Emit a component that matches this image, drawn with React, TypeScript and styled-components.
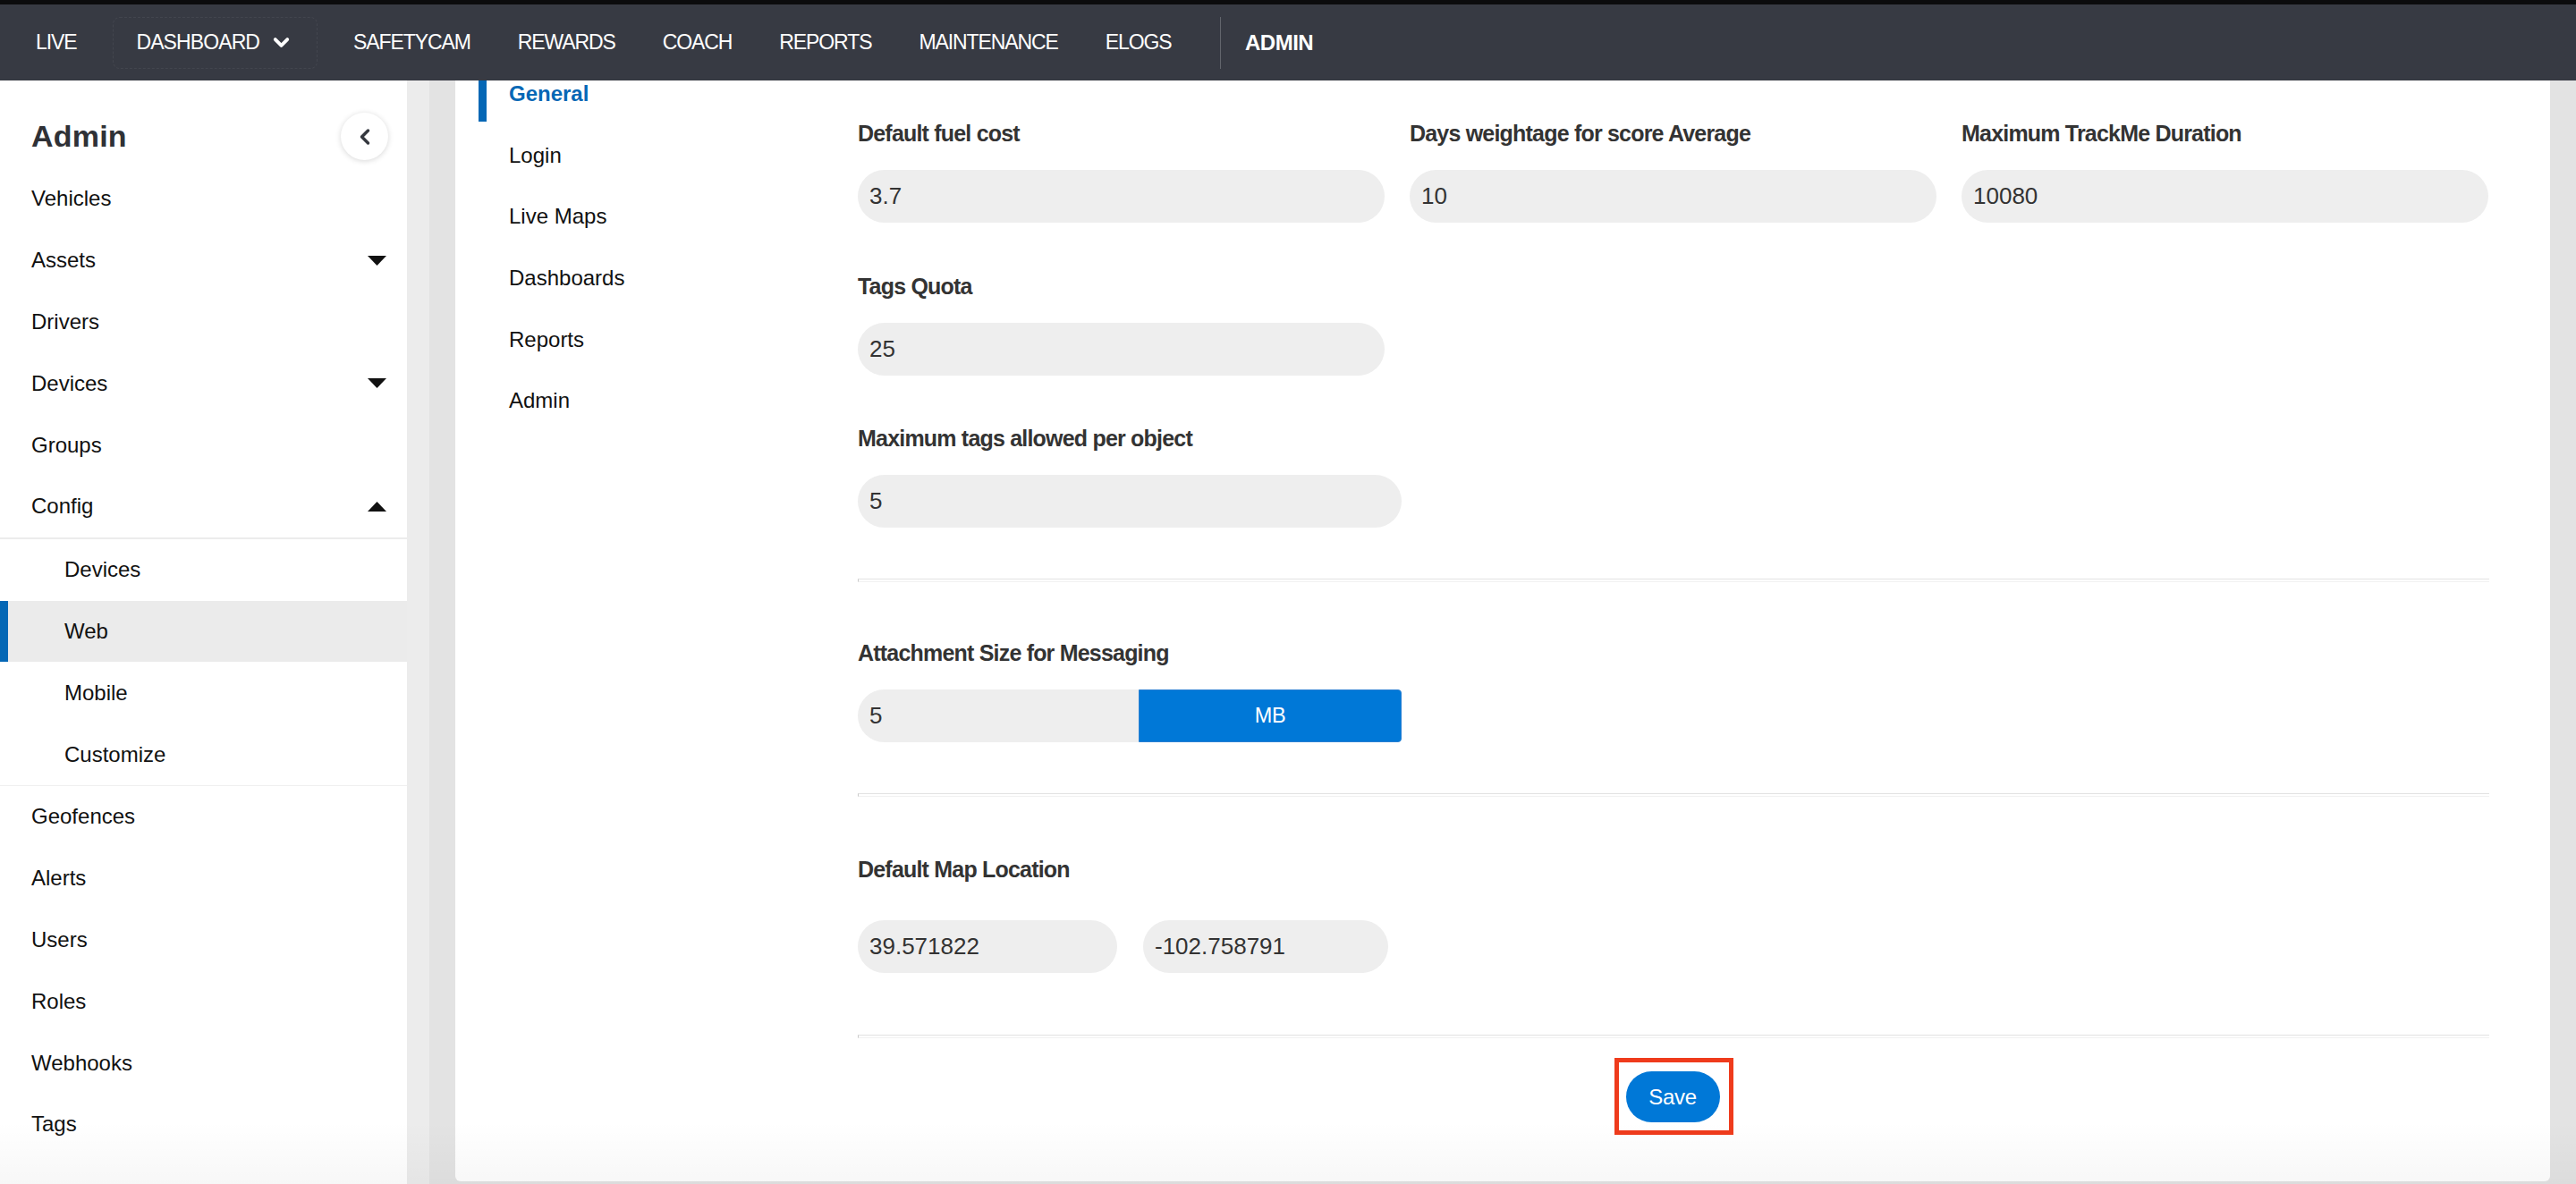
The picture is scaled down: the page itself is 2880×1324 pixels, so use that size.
import React from "react";
import styled, { createGlobalStyle } from "styled-components";
import { ChevronDown, ChevronLeft } from "lucide-react";

const SANS = `"Liberation Sans", Arial, sans-serif`;
const BLUE_DARK = "#0567b5";
const BLUE = "#0078d7";

const Global = createGlobalStyle`
  html, body { margin: 0; padding: 0; height: 1324px; overflow: hidden; background: #e3e3e3; }
  * { box-sizing: border-box; }
  body { font-family: ${SANS}; }
`;

const Page = styled.div`
  display: flex;
  flex-direction: column;
  height: 1324px;
`;

const TopBar = styled.nav`
  height: 90px;
  flex: none;
  background: #373a43;
  border-top: 5px solid #0b0b0d;
  display: flex;
  align-items: center;
  padding-left: 13.5px;
`;

const NavItem = styled.a<{ $bold?: boolean }>`
  font-family: ${SANS};
  font-size: ${(p) => (p.$bold ? 24 : 23)}px;
  letter-spacing: ${(p) => (p.$bold ? -0.5 : -1.1)}px;
  color: #fff;
  font-weight: ${(p) => (p.$bold ? 700 : 400)};
  padding: 0 26.5px;
  white-space: nowrap;
  text-decoration: none;
`;

const NavDrop = styled.a`
  display: flex;
  align-items: center;
  gap: 11px;
  height: 58px;
  margin: 0 14px;
  padding: 0 25.5px;
  border: 1px dashed rgba(255, 255, 255, 0.06);
  border-radius: 8px;
  font-family: ${SANS};
  font-size: 23px;
  letter-spacing: -0.9px;
  color: #fff;
  white-space: nowrap;
`;

const NavSep = styled.span`
  width: 1px;
  height: 58px;
  margin-left: 28.5px;
  background: rgba(255, 255, 255, 0.22);
`;

const Body = styled.div`
  flex: 1;
  display: flex;
  min-height: 0;
  position: relative;
  &::after {
    content: "";
    position: absolute;
    left: 0;
    right: 0;
    bottom: 0;
    height: 70px;
    pointer-events: none;
    background: linear-gradient(rgba(0, 0, 0, 0), rgba(0, 0, 0, 0.03));
  }
`;

const Sidebar = styled.aside`
  width: 480px;
  flex: none;
  background: #fff;
  border-right: 25px solid #ececec;
  display: flex;
  flex-direction: column;
  overflow: hidden;
`;

const SideHeader = styled.div`
  display: flex;
  align-items: center;
  justify-content: space-between;
  padding: 36px 21px 9px 35px;
`;

const SideTitle = styled.h1`
  margin: 0;
  font-family: ${SANS};
  font-weight: 900;
  font-size: 34px;
  color: #2f3136;
  letter-spacing: 0.2px;
`;

const CollapseBtn = styled.button`
  width: 53px;
  height: 53px;
  border-radius: 50%;
  border: none;
  background: #fff;
  box-shadow: 0 1px 6px rgba(0, 0, 0, 0.16);
  display: flex;
  align-items: center;
  justify-content: center;
  color: #35383f;
  padding: 0;
`;

const MenuItem = styled.div<{ $sub?: boolean; $active?: boolean }>`
  height: 68.8px;
  flex: none;
  display: flex;
  align-items: center;
  justify-content: space-between;
  padding: 0 23px 0 ${(p) => (p.$sub ? 72 : 35)}px;
  font-family: ${SANS};
  font-size: 24px;
  color: #111;
  background: ${(p) => (p.$active ? "#ebebeb" : "transparent")};
  box-shadow: ${(p) => (p.$active ? `inset 9px 0 0 ${BLUE_DARK}` : "none")};
`;

const MenuDivider = styled.div<{ $h: number; $c: string }>`
  height: ${(p) => p.$h}px;
  flex: none;
  background: ${(p) => p.$c};
`;

const Caret = ({ up }: { up?: boolean }) => (
  <svg width="21" height="11" viewBox="0 0 21 11">
    <polygon points={up ? "0,11 21,11 10.5,0" : "0,0 21,0 10.5,11"} fill="#111" />
  </svg>
);

const Main = styled.main`
  flex: 1;
  display: flex;
  padding: 0 29px 3px 29px;
  background: #e3e3e3;
  min-width: 0;
`;

const Panel = styled.section`
  flex: 1;
  display: flex;
  background: #fff;
  border-radius: 0 0 6px 6px;
  overflow: hidden;
  padding-left: 26px;
`;

const SubNav = styled.div`
  width: 424px;
  flex: none;
  margin-top: -22.6px;
  display: flex;
  flex-direction: column;
`;

const SubNavItem = styled.div<{ $active?: boolean }>`
  height: 68.6px;
  display: flex;
  align-items: center;
  border-left: 9px solid ${(p) => (p.$active ? BLUE_DARK : "transparent")};
  padding: 7px 0 0 25px;
  font-family: ${SANS};
  font-size: 24px;
  font-weight: ${(p) => (p.$active ? 700 : 400)};
  color: ${(p) => (p.$active ? BLUE_DARK : "#111")};
`;

const Form = styled.div`
  width: 1824px;
  flex: none;
  padding-top: 42px;
  display: flex;
  flex-direction: column;
`;

const Grid3 = styled.div`
  display: grid;
  grid-template-columns: repeat(3, 589px);
  column-gap: 28px;
`;

const Field = styled.div<{ $mt?: number; $w?: number }>`
  display: flex;
  flex-direction: column;
  margin-top: ${(p) => p.$mt ?? 0}px;
  width: ${(p) => (p.$w ? `${p.$w}px` : "auto")};
`;

const Label = styled.label<{ $gap?: number }>`
  font-family: ${SANS};
  font-weight: 700;
  font-size: 25px;
  letter-spacing: -0.8px;
  line-height: 34px;
  color: #333;
  margin-bottom: ${(p) => p.$gap ?? 24}px;
  white-space: nowrap;
`;

const TextInput = styled.input<{ $w?: number; $joined?: boolean }>`
  height: 59px;
  width: ${(p) => (p.$w ? `${p.$w}px` : "100%")};
  flex: none;
  border: none;
  outline: none;
  background: #eeeeee;
  border-radius: ${(p) => (p.$joined ? "30px 0 0 30px" : "30px")};
  padding: 0 13px;
  font-family: ${SANS};
  font-size: 26px;
  color: #333;
`;

const Group = styled.div`
  display: flex;
  width: 608px;
`;

const Addon = styled.button`
  flex: 1;
  height: 59px;
  border: 1px solid #2a80d2;
  border-radius: 0 4px 4px 0;
  background: ${BLUE};
  color: #fff;
  font-family: ${SANS};
  font-size: 23.5px;
  letter-spacing: -0.3px;
`;

const PairRow = styled.div`
  display: flex;
  gap: 29px;
`;

const Divider = styled.hr<{ $mt: number }>`
  margin: ${(p) => p.$mt}px 0 0;
  height: 4px;
  border: 0;
  border-top: 1px solid #e2e2e2;
  border-bottom: 1px solid #f1f1f1;
  border-left: 1px solid #c9c9c9;
`;

const SaveRow = styled.div`
  display: flex;
  justify-content: center;
  margin-top: 22px;
`;

const Highlight = styled.div`
  border: 5px solid #ef3b1c;
  padding: 10px 10px 9px 8px;
  display: flex;
`;

const SaveButton = styled.button`
  width: 105px;
  height: 57px;
  border: none;
  border-radius: 29px;
  background: ${BLUE};
  color: #fff;
  font-family: ${SANS};
  font-size: 24px;
  letter-spacing: -0.3px;
`;

const navItems = ["SAFETYCAM", "REWARDS", "COACH", "REPORTS", "MAINTENANCE", "ELOGS"];

type MenuEntry =
  | { kind: "item"; label: string; caret?: "up" | "down"; sub?: boolean; active?: boolean }
  | { kind: "divider"; h: number; c: string };

const menu: MenuEntry[] = [
  { kind: "item", label: "Vehicles" },
  { kind: "item", label: "Assets", caret: "down" },
  { kind: "item", label: "Drivers" },
  { kind: "item", label: "Devices", caret: "down" },
  { kind: "item", label: "Groups" },
  { kind: "item", label: "Config", caret: "up" },
  { kind: "divider", h: 2, c: "#ececec" },
  { kind: "item", label: "Devices", sub: true },
  { kind: "item", label: "Web", sub: true, active: true },
  { kind: "item", label: "Mobile", sub: true },
  { kind: "item", label: "Customize", sub: true },
  { kind: "divider", h: 1, c: "#efefef" },
  { kind: "item", label: "Geofences" },
  { kind: "item", label: "Alerts" },
  { kind: "item", label: "Users" },
  { kind: "item", label: "Roles" },
  { kind: "item", label: "Webhooks" },
  { kind: "item", label: "Tags" },
];

const subNav = ["General", "Login", "Live Maps", "Dashboards", "Reports", "Admin"];

export default function App() {
  return (
    <>
      <Global />
      <Page>
        <TopBar>
          <NavItem>LIVE</NavItem>
          <NavDrop>
            DASHBOARD
            <ChevronDown size={27} strokeWidth={3.4} />
          </NavDrop>
          {navItems.map((n) => (
            <NavItem key={n}>{n}</NavItem>
          ))}
          <NavSep />
          <NavItem $bold>ADMIN</NavItem>
        </TopBar>
        <Body>
          <Sidebar>
            <SideHeader>
              <SideTitle>Admin</SideTitle>
              <CollapseBtn aria-label="collapse">
                <ChevronLeft size={28} strokeWidth={3} />
              </CollapseBtn>
            </SideHeader>
            {menu.map((m, i) =>
              m.kind === "divider" ? (
                <MenuDivider key={i} $h={m.h} $c={m.c} />
              ) : (
                <MenuItem key={i} $sub={m.sub} $active={m.active}>
                  <span>{m.label}</span>
                  {m.caret && <Caret up={m.caret === "up"} />}
                </MenuItem>
              )
            )}
          </Sidebar>
          <Main>
            <Panel>
              <SubNav>
                {subNav.map((s, i) => (
                  <SubNavItem key={s} $active={i === 0}>
                    {s}
                  </SubNavItem>
                ))}
              </SubNav>
              <Form>
                <Grid3>
                  <Field>
                    <Label>Default fuel cost</Label>
                    <TextInput defaultValue="3.7" />
                  </Field>
                  <Field>
                    <Label>Days weightage for score Average</Label>
                    <TextInput defaultValue="10" />
                  </Field>
                  <Field>
                    <Label>Maximum TrackMe Duration</Label>
                    <TextInput defaultValue="10080" />
                  </Field>
                </Grid3>
                <Field $mt={54} $w={589}>
                  <Label>Tags Quota</Label>
                  <TextInput defaultValue="25" />
                </Field>
                <Field $mt={53} $w={608}>
                  <Label>Maximum tags allowed per object</Label>
                  <TextInput defaultValue="5" />
                </Field>
                <Divider $mt={57} />
                <Field $mt={62}>
                  <Label>Attachment Size for Messaging</Label>
                  <Group>
                    <TextInput $w={314} $joined defaultValue="5" />
                    <Addon>MB</Addon>
                  </Group>
                </Field>
                <Divider $mt={57} />
                <Field $mt={64}>
                  <Label $gap={40}>Default Map Location</Label>
                  <PairRow>
                    <TextInput $w={290} defaultValue="39.571822" />
                    <TextInput $w={274} defaultValue="-102.758791" />
                  </PairRow>
                </Field>
                <Divider $mt={69} />
                <SaveRow>
                  <Highlight>
                    <SaveButton>Save</SaveButton>
                  </Highlight>
                </SaveRow>
              </Form>
            </Panel>
          </Main>
        </Body>
      </Page>
    </>
  );
}
